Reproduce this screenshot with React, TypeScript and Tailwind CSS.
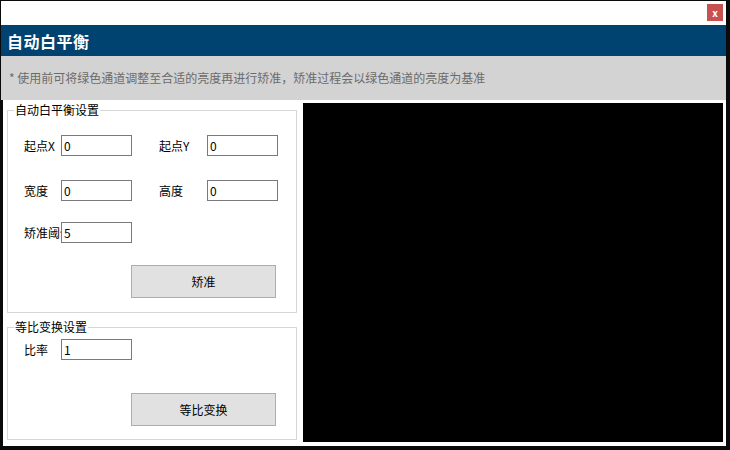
import React from 'react';

const ui = "font-['Noto_Sans_CJK_SC','Noto_Sans',sans-serif]";

const Field = ({ value, className = '' }: { value: string; className?: string }) => (
  <input
    defaultValue={value}
    readOnly
    className={`relative w-[71px] h-[21px] border border-[#7a7a7a] bg-white px-[2px] text-[12px] text-black outline-none ${ui} ${className}`}
  />
);

const Label = ({ text, w }: { text: string; w: string }) => (
  <div className={`${w} shrink-0 whitespace-nowrap text-[12px] text-black leading-[21px]`}>{text}</div>
);

const App: React.FC = () => {
  return (
    <div className={`w-[730px] h-[450px] bg-[#0a0a0a] pt-px pl-px pr-1 pb-1 flex flex-col ${ui}`}>
      {/* Title bar */}
      <div className="h-[24px] bg-white flex justify-end items-start">
        <button className="w-[16px] h-[17px] mt-[3px] mr-[3px] bg-[#c75050] text-white text-[10px] font-bold leading-[16px] flex items-center justify-center">
          x
        </button>
      </div>

      {/* Header */}
      <div className="h-[31px] bg-[#004370] flex items-center pl-[6px]">
        <span className="text-white text-[16px] font-bold tracking-[0.5px]">自动白平衡</span>
      </div>

      {/* Hint */}
      <div className="h-[44px] bg-[#d3d3d3] flex items-center pl-[8px]">
        <span className="text-[12px] text-[#6b6b6b]">* 使用前可将绿色通道调整至合适的亮度再进行矫准，矫准过程会以绿色通道的亮度为基准</span>
      </div>

      {/* Content */}
      <div className="flex-1 ml-[2px] bg-white flex">
        <div className="w-[300px] shrink-0 pl-[4px] pr-[6px] flex flex-col">
          <fieldset className="mt-[2px] h-[211px] border border-[#d6d6d6]">
            <legend className="ml-[6px] px-px text-[12px] leading-[16px] text-black">自动白平衡设置</legend>
            <div className="pl-[16px]">
              <div className="mt-[17px] flex items-center">
                <Label text="起点X" w="w-[37px]" />
                <Field value="0" />
                <div className="w-[27px]" />
                <Label text="起点Y" w="w-[48px]" />
                <Field value="0" />
              </div>
              <div className="mt-[24px] flex items-center">
                <Label text="宽度" w="w-[37px]" />
                <Field value="0" />
                <div className="w-[27px]" />
                <Label text="高度" w="w-[48px]" />
                <Field value="0" />
              </div>
              <div className="mt-[21px] flex items-center">
                <Label text="矫准阈值" w="w-[48px]" />
                <Field value="5" className="-ml-[11px]" />
              </div>
              <div className="mt-[22px] pl-[107px]">
                <button className="w-[145px] h-[33px] bg-[#e1e1e1] border border-[#adadad] text-[12px] text-black">矫准</button>
              </div>
            </div>
          </fieldset>

          <fieldset className="mt-[6px] h-[121px] border border-[#d6d6d6]">
            <legend className="ml-[6px] px-px text-[12px] leading-[16px] text-black">等比变换设置</legend>
            <div className="pl-[16px]">
              <div className="mt-[4px] flex items-center">
                <Label text="比率" w="w-[37px]" />
                <Field value="1" />
              </div>
              <div className="mt-[33px] pl-[107px]">
                <button className="w-[145px] h-[33px] bg-[#e1e1e1] border border-[#adadad] text-[12px] text-black">等比变换</button>
              </div>
            </div>
          </fieldset>
        </div>

        <div className="flex-1 bg-black mt-[3px] mr-[3px] mb-[4px]" />
      </div>
    </div>
  );
};

export default App;
